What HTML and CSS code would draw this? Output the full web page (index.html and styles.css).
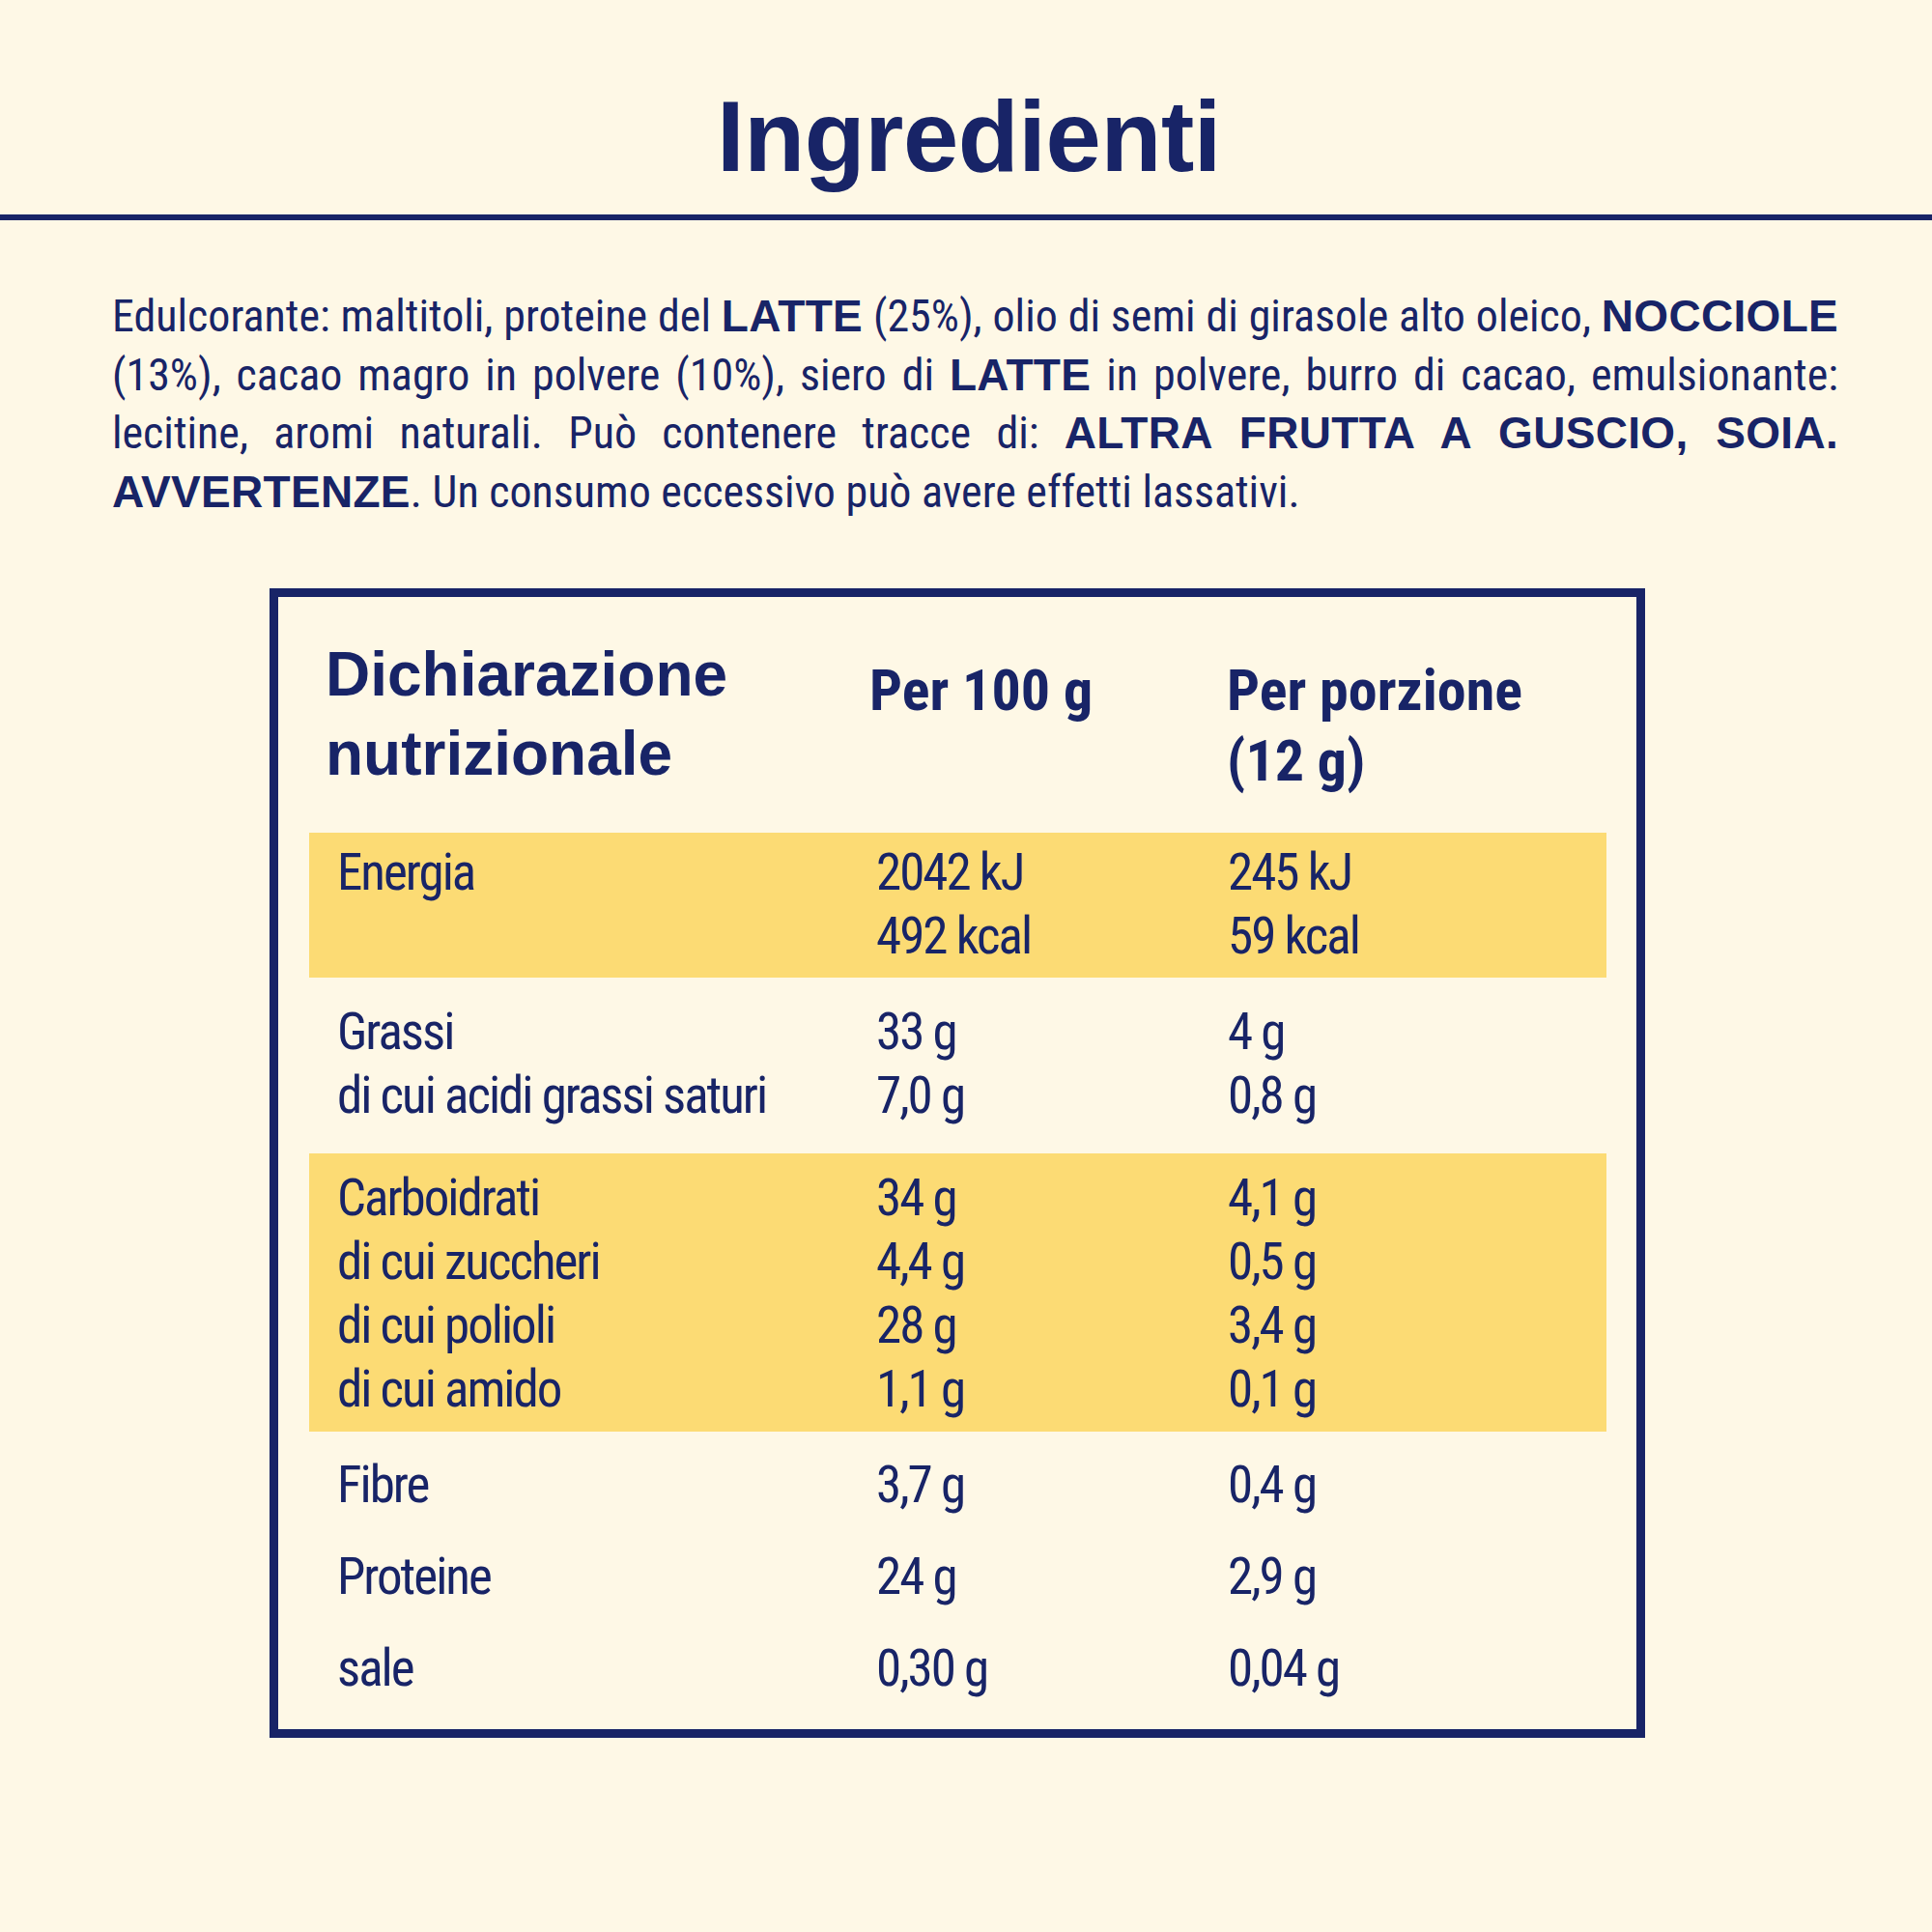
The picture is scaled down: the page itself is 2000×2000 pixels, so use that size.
FILE: index.html
```html
<!DOCTYPE html>
<html lang="it">
<head>
<meta charset="utf-8">
<title>Ingredienti</title>
<link rel="stylesheet" href="styles.css">
</head>
<body>
<div class="page">
  <header class="title-bar">
    <h1 class="title">Ingredienti</h1>
  </header>

  <div class="ingredients">
    <span class="line">Edulcorante: maltitoli, proteine del <b>LATTE</b> (25%), olio di semi di girasole alto oleico, <b>NOCCIOLE</b></span>
    <span class="line">(13%), cacao magro in polvere (10%), siero di <b>LATTE</b> in polvere, burro di cacao, emulsionante:</span>
    <span class="line">lecitine, aromi naturali. Può contenere tracce di: <b>ALTRA FRUTTA A GUSCIO, SOIA.</b></span>
    <span class="line last"><b>AVVERTENZE</b>. Un consumo eccessivo può avere effetti lassativi.</span>
  </div>

  <section class="nutrition">
    <div class="nutri-head">
      <div class="head-title">Dichiarazione<br>nutrizionale</div>
      <div class="head-col">Per 100 g</div>
      <div class="head-col">Per porzione<br>(12 g)</div>
    </div>

    <div class="nutri-row band row-energy">
      <div class="cell label">Energia</div>
      <div class="cell">2042 kJ<br>492 kcal</div>
      <div class="cell">245 kJ<br>59 kcal</div>
    </div>

    <div class="nutri-row row-fat">
      <div class="cell label">Grassi<br>di cui acidi grassi saturi</div>
      <div class="cell">33 g<br>7,0 g</div>
      <div class="cell">4 g<br>0,8 g</div>
    </div>

    <div class="nutri-row band row-carb">
      <div class="cell label">Carboidrati<br>di cui zuccheri<br>di cui polioli<br>di cui amido</div>
      <div class="cell">34 g<br>4,4 g<br>28 g<br>1,1 g</div>
      <div class="cell">4,1 g<br>0,5 g<br>3,4 g<br>0,1 g</div>
    </div>

    <div class="nutri-row row-fibre">
      <div class="cell label">Fibre</div>
      <div class="cell">3,7 g</div>
      <div class="cell">0,4 g</div>
    </div>

    <div class="nutri-row row-protein">
      <div class="cell label">Proteine</div>
      <div class="cell">24 g</div>
      <div class="cell">2,9 g</div>
    </div>

    <div class="nutri-row row-salt">
      <div class="cell label">sale</div>
      <div class="cell">0,30 g</div>
      <div class="cell">0,04 g</div>
    </div>
  </section>
</div>
</body>
</html>
```

FILE: styles.css
```css
html, body {
  margin: 0;
  padding: 0;
  background: #fef8e6;
}

body {
  width: 2000px;
  min-height: 2000px;
  color: #182467;
  font-family: "Liberation Sans", Arial, sans-serif;
}

.page {
  display: flex;
  flex-direction: column;
}

.title-bar {
  border-bottom: 6px solid #182467;
  padding: 90px 0 29px 6px;
}

.title {
  margin: 0;
  text-align: center;
  font-family: "Liberation Sans", Arial, sans-serif;
  font-weight: 700;
  font-size: 103px;
  line-height: 103px;
  letter-spacing: -0.4px;
}

.ingredients {
  margin: 69px 97px 0 116px;
  display: flex;
  flex-direction: column;
  font-family: Roboto, "Liberation Sans", sans-serif;
  font-stretch: condensed;
  font-size: 46px;
  line-height: 60.5px;
  letter-spacing: 0;
}

.ingredients .line {
  display: block;
  white-space: nowrap;
  text-align: justify;
  text-align-last: justify;
}

.ingredients .line.last {
  text-align-last: left;
}

.ingredients b {
  font-family: "Liberation Sans", Arial, sans-serif;
  font-stretch: normal;
  font-weight: 700;
  letter-spacing: 0.3px;
}

.nutrition {
  margin: 70px 0 0 279px;
  width: 1424px;
  box-sizing: border-box;
  border: 9px solid #182467;
  padding: 39px 31px 0 32px;
  display: flex;
  flex-direction: column;
}

.nutri-head {
  display: grid;
  grid-template-columns: 580px 370px 1fr;
  margin-bottom: 38px;
}

.head-title {
  padding-left: 17px;
  font-family: "Liberation Sans", Arial, sans-serif;
  font-weight: 700;
  font-size: 64px;
  line-height: 82px;
}

.head-col {
  padding-top: 21px;
  font-family: Roboto, "Liberation Sans", sans-serif;
  font-stretch: condensed;
  font-weight: 700;
  font-size: 60px;
  line-height: 73px;
}

.nutri-row {
  display: grid;
  grid-template-columns: 558px 364px 1fr;
  padding-left: 29px;
  font-family: Roboto, "Liberation Sans", sans-serif;
  font-stretch: condensed;
  font-size: 53px;
  line-height: 66px;
  letter-spacing: -2px;
}

.nutri-row.band {
  background: #fcdb74;
}

.row-energy { padding-top: 8px; padding-bottom: 10px; }
.row-fat { padding-top: 23px; padding-bottom: 27px; }
.row-carb { padding-top: 13px; padding-bottom: 11px; }
.row-fibre { padding-top: 22px; padding-bottom: 15px; }
.row-protein { padding-top: 14px; padding-bottom: 15px; }
.row-salt { padding-top: 14px; padding-bottom: 30px; }
```
